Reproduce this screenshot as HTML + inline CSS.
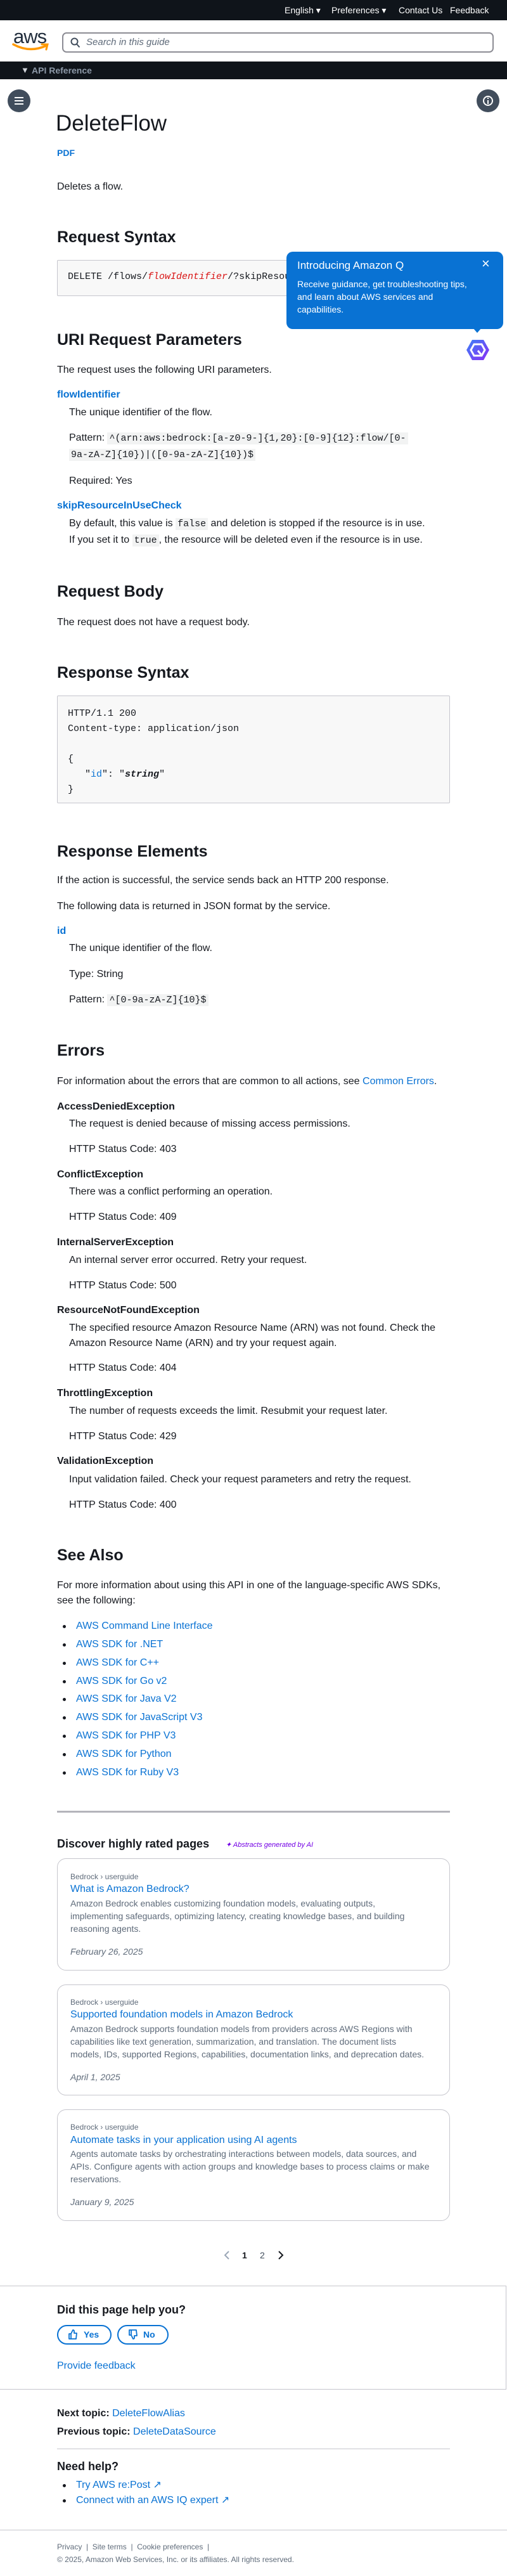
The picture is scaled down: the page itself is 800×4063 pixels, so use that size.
<!DOCTYPE html>
<html><head><meta charset="utf-8"><style>
*{margin:0;padding:0;box-sizing:border-box}
body{width:800px;height:4063px;position:relative;background:#fff;font-family:"Liberation Sans",sans-serif;color:#16191f;overflow:hidden}
.a{position:absolute;white-space:nowrap}
.t{position:absolute;left:90px;line-height:20px;font-size:16px;white-space:nowrap}
.i{left:109px}
.h{position:absolute;left:90px;font-size:25px;font-weight:bold;line-height:30px;white-space:nowrap}
.l{color:#0972d3}
.b{font-weight:bold}
.m{font-family:"Liberation Mono",monospace;font-size:15px}
code.c{font-family:"Liberation Mono",monospace;font-size:15px;background:#f2f3f3;padding:1px 3px}
.code{position:absolute;left:90px;width:620px;background:#f8f8f8;border:1px solid #c6c6cd;border-radius:2px}
.card{position:absolute;left:90px;width:620px;border:1px solid #c6c6cd;border-radius:14px}
.cb{position:absolute;left:111px;font-size:12px;color:#5f6b7a;white-space:nowrap;line-height:16px}
.ct{position:absolute;left:111px;font-size:16px;color:#0972d3;white-space:nowrap;line-height:20px}
.cd{position:absolute;left:111px;font-size:14px;color:#5f6b7a;white-space:nowrap;line-height:20px}
.cdt{position:absolute;left:111px;font-size:14px;color:#5f6b7a;font-style:italic;white-space:nowrap;line-height:20px}
.dot{position:absolute;left:99px;width:5px;height:5px;border-radius:50%;background:#16191f}
</style></head><body>

<div class="a" style="left:0;top:0;width:800px;height:32px;background:#0f141a"></div>
<div class="a" style="left:449px;top:7px;color:#fff;font-size:14px;line-height:18px">English ▾</div>
<div class="a" style="left:523px;top:7px;color:#fff;font-size:14px;line-height:18px">Preferences ▾</div>
<div class="a" style="left:629px;top:7px;color:#fff;font-size:14px;line-height:18px">Contact Us</div>
<div class="a" style="left:710px;top:7px;color:#fff;font-size:14px;line-height:18px">Feedback</div>

<div class="a" style="left:21px;top:40px;font-size:31px;color:#232f3e;letter-spacing:-1px">aws</div>
<svg class="a" style="left:19px;top:66px" width="60" height="20" viewBox="0 0 60 20"><path d="M2 4 Q28 18 54 6" stroke="#ff9900" stroke-width="3.5" fill="none" stroke-linecap="round"/><path d="M47 4 L56 4 L54 12" stroke="#ff9900" stroke-width="3" fill="none" stroke-linecap="round"/></svg>
<div class="a" style="left:98px;top:51px;width:681px;height:32px;border:2px solid #8c8c94;border-radius:7px"></div>
<svg class="a" style="left:111px;top:59px" width="16" height="17" viewBox="0 0 16 17"><circle cx="6.5" cy="6.5" r="5" stroke="#414d5c" stroke-width="2" fill="none"/><path d="M10 10.5 L14.5 15.5" stroke="#414d5c" stroke-width="2"/></svg>
<div class="a" style="left:136px;top:58px;font-size:15px;font-style:italic;color:#5f6b7a;line-height:18px">Search in this guide</div>

<div class="a" style="left:0;top:97px;width:800px;height:28px;background:#0f141a"></div>
<div class="a" style="left:33px;top:102px;font-size:13px;color:#d1d5db;line-height:18px">▼</div>
<div class="a" style="left:50px;top:102px;font-size:14px;font-weight:bold;color:#8d99a8;line-height:18px">API Reference</div>

<div class="a" style="left:12px;top:141px;width:36px;height:36px;border-radius:50%;background:#414d5c"></div>
<div class="a" style="left:23px;top:153px;width:14px;height:2px;background:#fff;box-shadow:0 5px 0 #fff,0 10px 0 #fff"></div>
<div class="a" style="left:752px;top:141px;width:36px;height:36px;border-radius:50%;background:#414d5c"></div>
<div class="a" style="left:762px;top:151px;width:16px;height:16px;border-radius:50%;border:2px solid #fff"></div>
<div class="a" style="left:769px;top:154px;width:2px;height:2px;background:#fff"></div>
<div class="a" style="left:769px;top:158px;width:2px;height:6px;background:#fff"></div>

<div class="a" style="left:88px;top:174px;font-size:35px;font-weight:300;line-height:42px;color:#16191f">DeleteFlow</div>
<div class="t l b" style="top:231px;font-size:14px">PDF</div>
<div class="t" style="top:285px">Deletes a flow.</div>

<div class="h" style="top:359px">Request Syntax</div>
<div class="code" style="top:410px;height:57px"></div>
<div class="t m" style="left:107px;top:427px">DELETE /flows/<i style="color:#d91515">flowIdentifier</i>/?skipResourceInUseCheck=<i style="color:#d91515">skipResourceInUseCheck</i></div>

<div class="a" style="left:452px;top:397px;width:342px;height:122px;background:#0972d3;border-radius:10px"></div>
<div class="a" style="left:746px;top:517px;width:0;height:0;border-left:7px solid transparent;border-right:7px solid transparent;border-top:8px solid #0972d3"></div>
<div class="a" style="left:469px;top:409px;font-size:17px;color:#fff;line-height:20px">Introducing Amazon Q</div>
<div class="a" style="left:760px;top:404px;font-size:22px;color:#fff;line-height:24px">×</div>
<div class="a" style="left:469px;top:438px;font-size:14px;color:#fff;line-height:20px">Receive guidance, get troubleshooting tips,<br>and learn about AWS services and<br>capabilities.</div>
<svg class="a" style="left:735px;top:535px" width="38" height="34" viewBox="0 0 38 34"><defs><linearGradient id="g" x1="0" y1="0" x2="1" y2="1"><stop offset="0" stop-color="#3b82f6"/><stop offset="1" stop-color="#8b2cf5"/></linearGradient></defs><path d="M10 1 H28 L37 17 L28 33 H10 L1 17 Z" fill="url(#g)"/><path d="M13 8 H25 L30 17 L25 26 H13 L8 17 Z" fill="none" stroke="#fff" stroke-width="3"/><path d="M19 18 L24 24" stroke="#fff" stroke-width="3"/></svg>

<div class="h" style="top:521px">URI Request Parameters</div>
<div class="t" style="top:574px">The request uses the following URI parameters.</div>
<div class="t l b" style="top:613px">flowIdentifier</div>
<div class="t i" style="top:641px">The unique identifier of the flow.</div>
<div class="t i" style="top:681px">Pattern: <code class="c">^(arn:aws:bedrock:[a-z0-9-]{1,20}:[0-9]{12}:flow/[0-</code></div>
<div class="t i" style="top:707px"><code class="c">9a-zA-Z]{10})|([0-9a-zA-Z]{10})$</code></div>
<div class="t i" style="top:749px">Required: Yes</div>
<div class="t l b" style="top:788px">skipResourceInUseCheck</div>
<div class="t i" style="top:816px">By default, this value is <code class="c">false</code> and deletion is stopped if the resource is in use.</div>
<div class="t i" style="top:842px">If you set it to <code class="c">true</code>, the resource will be deleted even if the resource is in use.</div>

<div class="h" style="top:918px">Request Body</div>
<div class="t" style="top:972px">The request does not have a request body.</div>

<div class="h" style="top:1046px">Response Syntax</div>
<div class="code" style="top:1097px;height:170px"></div>
<div class="t m" style="left:107px;top:1114px;line-height:24px">HTTP/1.1 200<br>Content-type: application/json<br><br>{<br>&nbsp;&nbsp;&nbsp;"<span class="l">id</span>": "<b><i>string</i></b>"<br>}</div>

<div class="h" style="top:1328px">Response Elements</div>
<div class="t" style="top:1379px">If the action is successful, the service sends back an HTTP 200 response.</div>
<div class="t" style="top:1420px">The following data is returned in JSON format by the service.</div>
<div class="t l b" style="top:1459px">id</div>
<div class="t i" style="top:1486px">The unique identifier of the flow.</div>
<div class="t i" style="top:1527px">Type: String</div>
<div class="t i" style="top:1567px">Pattern: <code class="c">^[0-9a-zA-Z]{10}$</code></div>

<div class="h" style="top:1642px">Errors</div>
<div class="t" style="top:1696px">For information about the errors that are common to all actions, see <span class="l">Common Errors</span>.</div>
<div class="t b" style="top:1736px">AccessDeniedException</div>
<div class="t i" style="top:1763px">The request is denied because of missing access permissions.</div>
<div class="t i" style="top:1803px">HTTP Status Code: 403</div>
<div class="t b" style="top:1843px">ConflictException</div>
<div class="t i" style="top:1870px">There was a conflict performing an operation.</div>
<div class="t i" style="top:1910px">HTTP Status Code: 409</div>
<div class="t b" style="top:1950px">InternalServerException</div>
<div class="t i" style="top:1978px">An internal server error occurred. Retry your request.</div>
<div class="t i" style="top:2018px">HTTP Status Code: 500</div>
<div class="t b" style="top:2057px">ResourceNotFoundException</div>
<div class="t i" style="top:2085px">The specified resource Amazon Resource Name (ARN) was not found. Check the</div>
<div class="t i" style="top:2109px">Amazon Resource Name (ARN) and try your request again.</div>
<div class="t i" style="top:2148px">HTTP Status Code: 404</div>
<div class="t b" style="top:2188px">ThrottlingException</div>
<div class="t i" style="top:2216px">The number of requests exceeds the limit. Resubmit your request later.</div>
<div class="t i" style="top:2256px">HTTP Status Code: 429</div>
<div class="t b" style="top:2295px">ValidationException</div>
<div class="t i" style="top:2324px">Input validation failed. Check your request parameters and retry the request.</div>
<div class="t i" style="top:2364px">HTTP Status Code: 400</div>

<div class="h" style="top:2438px">See Also</div>
<div class="t" style="top:2491px">For more information about using this API in one of the language-specific AWS SDKs,</div>
<div class="t" style="top:2515px">see the following:</div>

<div class="dot" style="top:2563px"></div><div class="t l" style="left:120px;top:2555px">AWS Command Line Interface</div>
<div class="dot" style="top:2592px"></div><div class="t l" style="left:120px;top:2584px">AWS SDK for .NET</div>
<div class="dot" style="top:2621px"></div><div class="t l" style="left:120px;top:2613px">AWS SDK for C++</div>
<div class="dot" style="top:2650px"></div><div class="t l" style="left:120px;top:2642px">AWS SDK for Go v2</div>
<div class="dot" style="top:2678px"></div><div class="t l" style="left:120px;top:2670px">AWS SDK for Java V2</div>
<div class="dot" style="top:2707px"></div><div class="t l" style="left:120px;top:2699px">AWS SDK for JavaScript V3</div>
<div class="dot" style="top:2736px"></div><div class="t l" style="left:120px;top:2728px">AWS SDK for PHP V3</div>
<div class="dot" style="top:2765px"></div><div class="t l" style="left:120px;top:2757px">AWS SDK for Python</div>
<div class="dot" style="top:2794px"></div><div class="t l" style="left:120px;top:2786px">AWS SDK for Ruby V3</div>

<div class="a" style="left:90px;top:2856px;width:620px;height:3px;background:#b4b4bb"></div>
<div class="a" style="left:90px;top:2896px;font-size:18px;font-weight:bold;line-height:24px">Discover highly rated pages</div>
<div class="a" style="left:356px;top:2902px;font-size:11px;font-style:italic;color:#7300e5;line-height:16px">✦ Abstracts generated by AI</div>

<div class="card" style="top:2931px;height:177px"></div>
<div class="cb" style="top:2952px">Bedrock › userguide</div>
<div class="ct" style="top:2970px">What is Amazon Bedrock?</div>
<div class="cd" style="top:2992px">Amazon Bedrock enables customizing foundation models, evaluating outputs,<br>implementing safeguards, optimizing latency, creating knowledge bases, and building<br>reasoning agents.</div>
<div class="cdt" style="top:3068px">February 26, 2025</div>

<div class="card" style="top:3130px;height:175px"></div>
<div class="cb" style="top:3150px">Bedrock › userguide</div>
<div class="ct" style="top:3168px">Supported foundation models in Amazon Bedrock</div>
<div class="cd" style="top:3190px">Amazon Bedrock supports foundation models from providers across AWS Regions with<br>capabilities like text generation, summarization, and translation. The document lists<br>models, IDs, supported Regions, capabilities, documentation links, and deprecation dates.</div>
<div class="cdt" style="top:3266px">April 1, 2025</div>

<div class="card" style="top:3327px;height:176px"></div>
<div class="cb" style="top:3347px">Bedrock › userguide</div>
<div class="ct" style="top:3366px">Automate tasks in your application using AI agents</div>
<div class="cd" style="top:3387px">Agents automate tasks by orchestrating interactions between models, data sources, and<br>APIs. Configure agents with action groups and knowledge bases to process claims or make<br>reservations.</div>
<div class="cdt" style="top:3463px">January 9, 2025</div>

<svg class="a" style="left:352px;top:3549px" width="12" height="16"><path d="M9 2 L3 8 L9 14" stroke="#9ba7b6" stroke-width="2" fill="none"/></svg>
<div class="a" style="left:382px;top:3548px;font-size:14px;font-weight:bold;line-height:18px">1</div>
<div class="a" style="left:410px;top:3548px;font-size:14px;line-height:18px;color:#414d5c">2</div>
<svg class="a" style="left:437px;top:3549px" width="12" height="16"><path d="M3 2 L9 8 L3 14" stroke="#16191f" stroke-width="2" fill="none"/></svg>

<div class="a" style="left:-2px;top:3605px;width:801px;height:164px;border:1px solid #c6c6cd"></div>
<div class="a" style="left:90px;top:3632px;font-size:18px;font-weight:bold;line-height:22px">Did this page help you?</div>
<div class="a" style="left:90px;top:3667px;width:86px;height:31px;border:2px solid #0972d3;border-radius:16px"></div>
<svg class="a" style="left:107px;top:3673px" width="16" height="18" viewBox="0 0 16 18"><path d="M2 8 H5 V16 H2 Z M5 8 L8 2 Q10 2 10 4 V7 H14 L13 16 H5" stroke="#0972d3" stroke-width="1.8" fill="none" stroke-linejoin="round"/></svg>
<div class="a" style="left:132px;top:3673px;font-size:14px;font-weight:bold;color:#0972d3;line-height:18px">Yes</div>
<div class="a" style="left:185px;top:3667px;width:81px;height:31px;border:2px solid #0972d3;border-radius:16px"></div>
<svg class="a" style="left:202px;top:3673px" width="16" height="18" viewBox="0 0 16 18"><path d="M2 2 H5 V10 H2 Z M5 10 L8 16 Q10 16 10 14 V11 H14 L13 2 H5" stroke="#0972d3" stroke-width="1.8" fill="none" stroke-linejoin="round"/></svg>
<div class="a" style="left:226px;top:3673px;font-size:14px;font-weight:bold;color:#0972d3;line-height:18px">No</div>
<div class="t l" style="top:3722px">Provide feedback</div>

<div class="t" style="top:3797px"><b>Next topic:</b> <span class="l">DeleteFlowAlias</span></div>
<div class="t" style="top:3826px"><b>Previous topic:</b> <span class="l">DeleteDataSource</span></div>
<div class="a" style="left:90px;top:3862px;width:620px;height:1px;background:#c6c6cd"></div>
<div class="a" style="left:90px;top:3879px;font-size:18px;font-weight:bold;line-height:22px">Need help?</div>
<div class="dot" style="top:3918px"></div><div class="t l" style="left:120px;top:3910px">Try AWS re:Post ↗</div>
<div class="dot" style="top:3942px"></div><div class="t l" style="left:120px;top:3934px">Connect with an AWS IQ expert ↗</div>

<div class="a" style="left:0;top:3990px;width:800px;height:1px;background:#c6c6cd"></div>
<div class="a" style="left:90px;top:4009px;font-size:12px;color:#5f6b7a;line-height:16px">Privacy &nbsp;|&nbsp; Site terms &nbsp;|&nbsp; Cookie preferences &nbsp;|</div>
<div class="a" style="left:90px;top:4029px;font-size:12px;color:#5f6b7a;line-height:16px">© 2025, Amazon Web Services, Inc. or its affiliates. All rights reserved.</div>
</body></html>
